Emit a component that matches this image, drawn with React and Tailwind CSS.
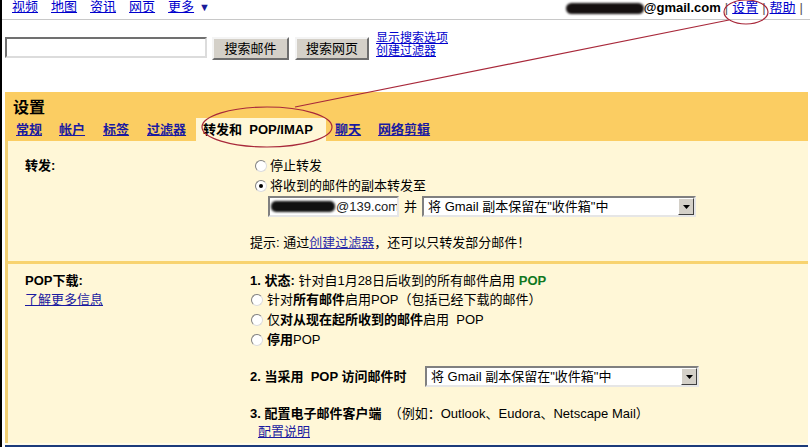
const font = "font-['Liberation_Sans','Noto_Sans_CJK_SC',sans-serif]"

function Radio({ checked }) {
  return (
    <span className="inline-flex w-[12px] h-[12px] shrink-0 items-center justify-center rounded-full bg-white border border-t-[#808080] border-l-[#808080] border-b-[#dcdcdc] border-r-[#dcdcdc]">
      {checked && <span className="w-[4px] h-[4px] rounded-full bg-black" />}
    </span>
  )
}

function Select({ width }) {
  return (
    <div className={`flex h-[21px] ${width} items-center bg-white border-2 border-t-[#808080] border-l-[#808080] border-b-[#e6e6e6] border-r-[#e6e6e6]`}>
      <span className="flex-1 pl-[4px] text-[13px] leading-[17px] whitespace-nowrap">将 Gmail 副本保留在"收件箱"中</span>
      <span className="flex w-[16px] h-[17px] items-center justify-center bg-[#d4d0c8] border border-t-white border-l-white border-b-[#404040] border-r-[#404040]">
        <svg width="7" height="4" viewBox="0 0 7 4"><path d="M0 0h7L3.5 4z" fill="#000" /></svg>
      </span>
    </div>
  )
}

function Button({ children, width }) {
  return (
    <button className={`${width} h-[23px] bg-[#d4d0c8] text-[13px] leading-[17px] text-black border-2 border-t-[#f4f4f4] border-l-[#f4f4f4] border-b-[#6e6e6e] border-r-[#6e6e6e]`}>
      {children}
    </button>
  )
}

export default function App() {
  const tabs = [
    { label: '常规', ml: 'ml-[11px]' },
    { label: '帐户', ml: 'ml-[17px]' },
    { label: '标签', ml: 'ml-[18px]' },
    { label: '过滤器', ml: 'ml-[18px]' },
  ]

  return (
    <div className={`relative w-[810px] h-[447px] overflow-hidden bg-white border-l-2 border-black text-black ${font}`}>
      {/* top bar */}
      <div className="flex h-[20px] justify-between border-b border-[#c8c8c8] overflow-hidden">
        <div className="flex gap-[13px] ml-[10px] text-[13px] leading-[14px]">
          {['视频', '地图', '资讯', '网页', '更多'].map((t) => (
            <a key={t} className="text-[#0000cc] underline">{t}</a>
          ))}
          <span className="text-[#1a1a9a] text-[11px] -ml-[8px]">▼</span>
        </div>
        <div className="flex items-center mr-[7px] -mt-[3px] text-[13px] leading-[16px] whitespace-nowrap">
          <span className="w-[78px] h-[11px] rounded-full bg-[#151010] blur-[1px]" />
          <span className="font-bold">@gmail.com</span>
          <span className="mx-[4px] text-[#555]">|</span>
          <a className="text-[#0000cc] underline">设置</a>
          <span className="mx-[4px] text-[#555]">|</span>
          <a className="text-[#0000cc] underline">帮助</a>
          <span className="ml-[4px] text-[#555]">|</span>
        </div>
      </div>

      {/* search row */}
      <div className="flex items-start pt-[16px]">
        <div className="ml-[3px] mt-[1px] w-[202px] h-[21px] bg-white border-2 border-t-[#707070] border-l-[#707070] border-b-[#dcdcdc] border-r-[#dcdcdc]" />
        <div className="ml-[5px]"><Button width="w-[77px]">搜索邮件</Button></div>
        <div className="ml-[6px]"><Button width="w-[74px]">搜索网页</Button></div>
        <div className="ml-[7px] -mt-[4px] flex flex-col text-[12px] leading-[13px]">
          <a className="text-[#0000cc] underline">显示搜索选项</a>
          <a className="text-[#0000cc] underline">创建过滤器</a>
        </div>
      </div>

      {/* settings panel */}
      <div className="ml-[3px] mr-[2px] mt-[32px]">
        <div className="bg-[#fbcd62] pt-[6px]">
          <div className="pl-[8px] text-[16px] leading-[20px] font-bold">设置</div>
          <div className="flex items-stretch h-[23px] text-[13px] font-bold">
            {tabs.map((t) => (
              <a key={t.label} className={`${t.ml} self-center leading-[16px] text-[#1a1aa0] underline`}>{t.label}</a>
            ))}
            <div className="ml-[10px] w-[130px] pl-[7px] flex items-center bg-[#fff7d7] leading-[16px]">
              转发和&nbsp;&nbsp;POP/IMAP
            </div>
            <a className="ml-[9px] self-center leading-[16px] text-[#1a1aa0] underline">聊天</a>
            <a className="ml-[17px] self-center leading-[16px] text-[#1a1aa0] underline">网络剪辑</a>
          </div>
        </div>

        <div className="bg-[#fff7d7] border-l-[3px] border-[#f2cf72] h-[302px] text-[13px]">
          {/* forwarding */}
          <div className="flex pt-[15px] pb-[8px] border-b-[3px] border-[#f8d36f]">
            <div className="w-[242px] pl-[17px] font-bold leading-[20px]">转发:</div>
            <div className="flex flex-col">
              <div className="flex items-center gap-[3px] ml-[5px] h-[20px]">
                <Radio /> <span>停止转发</span>
              </div>
              <div className="flex items-center gap-[3px] ml-[5px] h-[20px]">
                <Radio checked /> <span>将收到的邮件的副本转发至</span>
              </div>
              <div className="flex items-center h-[21px]">
                <div className="ml-[18px] flex items-center w-[131px] h-[21px] overflow-hidden bg-white border-2 border-t-[#808080] border-l-[#808080] border-b-[#e6e6e6] border-r-[#e6e6e6]">
                  <span className="ml-[1px] w-[64px] h-[11px] shrink-0 rounded-[5px] bg-[#111] blur-[0.8px]" />
                  <span className="ml-[1px] whitespace-nowrap leading-[17px] text-[#222]">@139.com</span>
                </div>
                <span className="mx-[5px]">并</span>
                <Select width="w-[274px]" />
              </div>
              <div className="mt-[16px] leading-[20px]">
                提示: 通过<a className="text-[#2a2aa8] underline">创建过滤器</a>，还可以只转发部分邮件！
              </div>
            </div>
          </div>

          {/* POP */}
          <div className="flex pt-[7px]">
            <div className="w-[242px] pl-[17px] leading-[19px]">
              <div className="font-bold">POP下载:</div>
              <a className="text-[#1a1aa0] underline">了解更多信息</a>
            </div>
            <div className="flex flex-col">
              <div className="leading-[19px]">
                <b>1. 状态:</b> 针对自1月28日后收到的所有邮件启用 <b className="text-[#11771f]">POP</b>
              </div>
              <div className="flex items-center gap-[4px] ml-[1px] h-[20px]">
                <Radio /> <span>针对<b>所有邮件</b>启用POP（包括已经下载的邮件）</span>
              </div>
              <div className="flex items-center gap-[4px] ml-[1px] h-[20px]">
                <Radio /> <span>仅<b>对从现在起所收到的邮件</b>启用&nbsp;&nbsp;POP</span>
              </div>
              <div className="flex items-center gap-[4px] ml-[1px] h-[20px]">
                <Radio /> <span><b>停用</b>POP</span>
              </div>
              <div className="flex items-center mt-[16px] h-[21px]">
                <b className="w-[175px] whitespace-nowrap">2. 当采用&nbsp;&nbsp;POP 访问邮件时</b>
                <Select width="w-[274px]" />
              </div>
              <div className="mt-[17px] leading-[19px] whitespace-nowrap">
                <b>3. 配置电子邮件客户端</b>&nbsp;&nbsp;（例如：Outlook、Eudora、Netscape Mail）
              </div>
              <a className="ml-[8px] leading-[18px] text-[#1a1aa0] underline">配置说明</a>
            </div>
          </div>
        </div>
        <div className="h-[2px] bg-[#fffbe8]" />
        <div className="h-[3px] bg-[#1c3b7a]" />
      </div>

      {/* annotation overlay */}
      <svg className="absolute inset-0 pointer-events-none" width="810" height="447" viewBox="0 0 810 447">
        <ellipse cx="744" cy="12" rx="22" ry="12" fill="none" stroke="#a8283a" strokeWidth="1.2" />
        <line x1="727" y1="20" x2="293" y2="107" stroke="#a8283a" strokeWidth="1.2" />
        <ellipse cx="265" cy="127" rx="65" ry="20" fill="none" stroke="#a8283a" strokeWidth="1.2" />
      </svg>
    </div>
  )
}
